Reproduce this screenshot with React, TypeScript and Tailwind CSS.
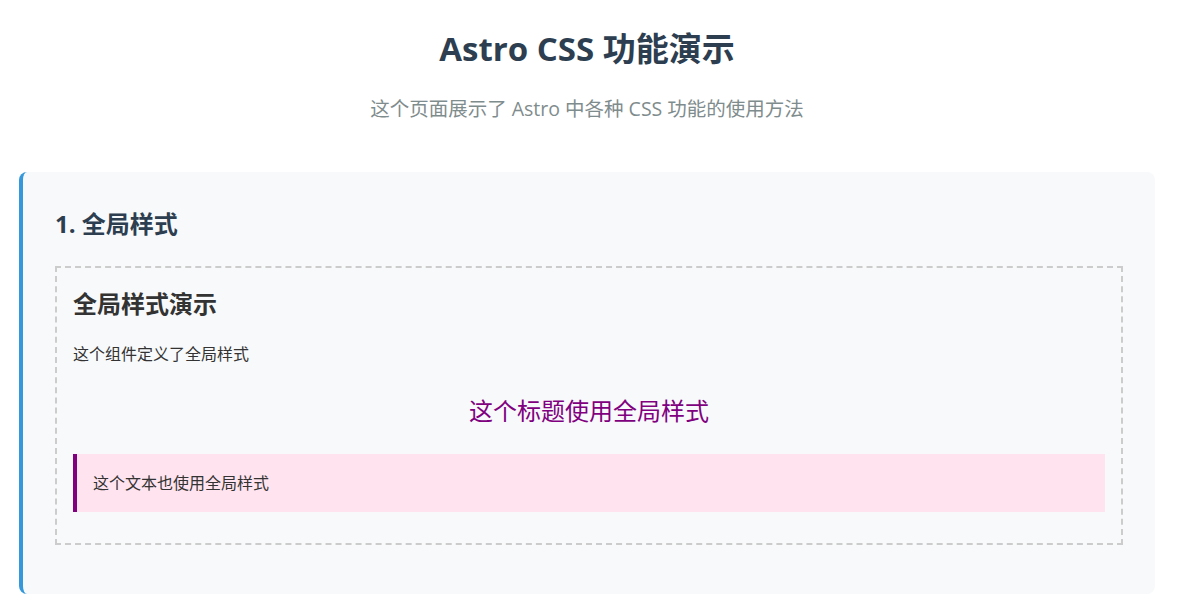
const FONT = { fontFamily: '"Open Sans", "Noto Sans CJK SC", sans-serif' };

export default function App() {
  return (
    <div className="min-h-screen bg-white text-[#333]" style={FONT}>
      <div className="ml-[19px] w-[1136px] pt-[25px]">
        <header className="text-center">
          <h1 className="text-[33px] leading-[48px] font-bold text-[#2c3e50]">Astro CSS 功能演示</h1>
          <p className="mt-[21px] text-[19.5px] leading-[29px] text-[#7f8c8d]">
            这个页面展示了 Astro 中各种 CSS 功能的使用方法
          </p>
        </header>

        <section className="mt-[49px] rounded-lg border-l-4 border-[#3498db] bg-[#f8f9fa] p-8">
          <h2 className="text-[24px] leading-[40px] font-bold text-[#2c3e50] mb-[22px]">1. 全局样式</h2>

          <div className="border-2 border-dashed border-[#ccc] p-4 mb-[17px]">
            <h3 className="text-[24px] leading-[40px] font-bold text-[#333]">全局样式演示</h3>
            <p className="mt-[18px] text-[16px] leading-[24px]">这个组件定义了全局样式</p>
            <h4 className="mt-[27px] text-center text-[24px] leading-[36px] text-[#800080]">
              这个标题使用全局样式
            </h4>
            <p className="mt-[25px] mb-[15px] border-l-4 border-[#800080] bg-[#ffe4ef] px-4 py-[17px] text-[16px] leading-[24px]">
              这个文本也使用全局样式
            </p>
          </div>
        </section>
      </div>
    </div>
  );
}
